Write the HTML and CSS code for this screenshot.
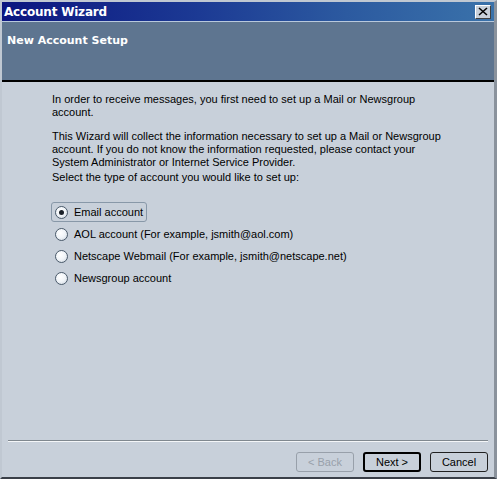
FILE: index.html
```html
<!DOCTYPE html>
<html>
<head>
<meta charset="utf-8">
<link rel="stylesheet" href="styles.css">
</head>
<body>
<div class="window">
  <div class="titlebar">
    <span class="title">Account Wizard</span>
    <span class="close">
      <svg width="10" height="9" viewBox="0 0 10 9"><path d="M1 1 L9 8 M9 1 L1 8" stroke="#000" stroke-width="1.6" fill="none"/></svg>
    </span>
  </div>
  <div class="header">New Account Setup</div>
  <div class="content">
    <p class="p1">In order to receive messages, you first need to set up a Mail or Newsgroup account.</p>
    <p class="p2">This Wizard will collect the information necessary to set up a Mail or Newsgroup account. If you do not know the information requested, please contact your System Administrator or Internet Service Provider.</p>
    <p class="p3">Select the type of account you would like to set up:</p>
    <div class="radios">
      <div class="radio focus"><span class="dot checked"></span><span>Email account</span></div>
      <div class="radio"><span class="dot"></span><span>AOL account (For example, jsmith@aol.com)</span></div>
      <div class="radio"><span class="dot"></span><span>Netscape Webmail (For example, jsmith@netscape.net)</span></div>
      <div class="radio"><span class="dot"></span><span>Newsgroup account</span></div>
    </div>
  </div>
  <div class="footer">
    <div class="sep"></div>
    <div class="buttons">
      <button class="btn disabled">&lt; Back</button>
      <button class="btn default">Next &gt;</button>
      <button class="btn">Cancel</button>
    </div>
  </div>
</div>
</body>
</html>
```
FILE: styles.css
```css
html, body {
  margin: 0;
  padding: 0;
  background: #c8d0da;
}
.window {
  width: 497px;
  height: 479px;
  box-sizing: border-box;
  border-top: 2px solid #c0c8d2;
  border-left: 2px solid #c0c8d2;
  border-right: 3px solid #8a929c;
  border-bottom: 2px solid #3a3f48;
  background: #c8d0da;
  display: flex;
  flex-direction: column;
  font-family: "Liberation Sans", Arial, sans-serif;
  font-size: 11px;
  color: #000;
}
.titlebar {
  height: 19px;
  background: linear-gradient(to right, #0c1680 0%, #1c3a94 40%, #2c5aa0 70%, #3a72aa 100%);
  display: flex;
  align-items: center;
  justify-content: space-between;
  padding: 0 3px 0 2px;
  border-bottom: 1px solid #b8c8dc;
}
.title {
  color: #fff;
  font-weight: bold;
  font-size: 12px;
  font-family: "DejaVu Sans", sans-serif;
  letter-spacing: -0.2px;
}
.close {
  width: 14px;
  height: 12px;
  background: #c8d0da;
  border: 1px solid;
  border-color: #fff #404040 #404040 #fff;
  display: flex;
  align-items: center;
  justify-content: center;
}
.header {
  background: #5e7590;
  border-bottom: 2px solid #000;
  color: #fff;
  font-weight: bold;
  font-size: 11px;
  font-family: "DejaVu Sans", sans-serif;
  padding: 12px 0 0 5px;
  box-sizing: border-box;
  height: 60px;
}
.content {
  flex: 1;
  padding: 11px 40px 0 50px;
}
.content p {
  margin: 0;
  line-height: 13px;
}
.content .p1 {
  margin-bottom: 11px;
}
.content .p2 {
  margin-bottom: 2px;
}
.radios {
  margin-top: 19px;
  display: flex;
  flex-direction: column;
  gap: 4px;
}
.radio {
  display: flex;
  align-items: center;
  gap: 6px;
  height: 18px;
  padding-left: 3px;
  align-self: flex-start;
}
.radio.focus {
  border: 1px solid #8898a8;
  border-radius: 3px;
  padding: 0 3px 0 3px;
  margin-left: -1px;
  margin-top: -1px;
  margin-bottom: -1px;
}
.dot {
  width: 11px;
  height: 11px;
  border-radius: 50%;
  border: 1px solid #4a5a6a;
  background: radial-gradient(circle at 40% 35%, #ffffff 0%, #f0f4f8 50%, #c8d0da 100%);
  position: relative;
  flex: none;
}
.dot.checked::after {
  content: "";
  position: absolute;
  left: 3px;
  top: 3px;
  width: 5px;
  height: 5px;
  border-radius: 50%;
  background: #1a2028;
}
.footer {
  padding: 0 6px 5px 6px;
}
.sep {
  height: 0;
  border-top: 1px solid #80888f;
  border-bottom: 1px solid #f4f6f8;
}
.buttons {
  display: flex;
  justify-content: flex-end;
  gap: 9px;
  margin-top: 10px;
}
.btn {
  width: 58px;
  height: 20px;
  font-family: "Liberation Sans", Arial, sans-serif;
  font-size: 11px;
  background: #c8d0da;
  border: 1px solid #202020;
  border-radius: 3px;
  color: #000;
  padding: 0;
}
.btn.default {
  border: 2px solid #000;
}
.btn.disabled {
  color: #98a0aa;
  border-color: #98a0aa;
}
```
